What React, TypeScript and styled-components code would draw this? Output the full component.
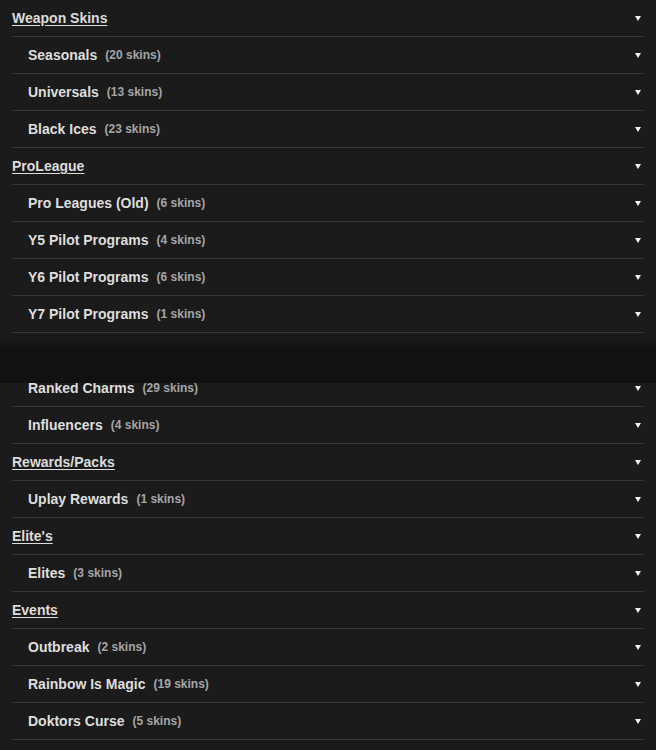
import React from "react";
import styled, { createGlobalStyle } from "styled-components";

const GlobalStyle = createGlobalStyle`
    html, body {
        margin: 0;
        padding: 0;
        background: #1b1b1b;
    }
    body {
        font-family: "Liberation Sans", Arial, sans-serif;
        overflow: hidden;
    }
`;

interface ISkinRow {
    title: string;
    count?: number;
    isHeader?: boolean;
}

const rows: ISkinRow[] = [
    { title: "Weapon Skins", isHeader: true },
    { title: "Seasonals", count: 20 },
    { title: "Universals", count: 13 },
    { title: "Black Ices", count: 23 },
    { title: "ProLeague", isHeader: true },
    { title: "Pro Leagues (Old)", count: 6 },
    { title: "Y5 Pilot Programs", count: 4 },
    { title: "Y6 Pilot Programs", count: 6 },
    { title: "Y7 Pilot Programs", count: 1 },
    { title: "Charms", isHeader: true },
    { title: "Ranked Charms", count: 29 },
    { title: "Influencers", count: 4 },
    { title: "Rewards/Packs", isHeader: true },
    { title: "Uplay Rewards", count: 1 },
    { title: "Elite's", isHeader: true },
    { title: "Elites", count: 3 },
    { title: "Events", isHeader: true },
    { title: "Outbreak", count: 2 },
    { title: "Rainbow Is Magic", count: 19 },
    { title: "Doktors Curse", count: 5 },
];

const SkinListLayout = styled.div`
    position: relative;
    width: 656px;
    height: 750px;
    padding: 0 12px;
    box-sizing: border-box;
    background: #1b1b1b;
`;

interface RowProps {
    isHeader?: boolean;
}

const Row = styled.div<RowProps>`
    display: flex;
    align-items: center;
    height: 36px;
    padding-left: ${(props) => (props.isHeader ? "0" : "16px")};
    padding-right: 3px;
    border-bottom: 1px solid #363636;
    cursor: pointer;
`;

const HeaderTitle = styled.span`
    font-size: 14px;
    font-weight: 700;
    color: #dcdcdc;
    text-decoration: underline;
    text-underline-offset: 2px;
`;

const ItemTitle = styled.span`
    font-size: 14px;
    font-weight: 700;
    color: #dedede;
`;

const SkinCount = styled.span`
    margin-left: 8px;
    font-size: 12px;
    font-weight: 700;
    color: #a6a6a6;
`;

const Caret = styled.span`
    margin-left: auto;
    width: 0;
    height: 0;
    border-left: 3.5px solid transparent;
    border-right: 3.5px solid transparent;
    border-top: 5px solid #f2f2f2;
`;

const Shade = styled.div`
    position: absolute;
    left: 0;
    right: 0;
    top: 334px;
    height: 49px;
    background: linear-gradient(to bottom, #1b1b1b 0, #121212 14px, #111111 100%);
`;

const SkinList: React.FC = () => {
    return (
        <SkinListLayout>
            {rows.map((row, i) => (
                <Row key={i} isHeader={row.isHeader}>
                    {row.isHeader ? (
                        <HeaderTitle>{row.title}</HeaderTitle>
                    ) : (
                        <>
                            <ItemTitle>{row.title}</ItemTitle>
                            <SkinCount>({row.count} skins)</SkinCount>
                        </>
                    )}
                    <Caret />
                </Row>
            ))}
            <Shade />
        </SkinListLayout>
    );
};

const App: React.FC = () => {
    return (
        <>
            <GlobalStyle />
            <SkinList />
        </>
    );
};

export default App;
